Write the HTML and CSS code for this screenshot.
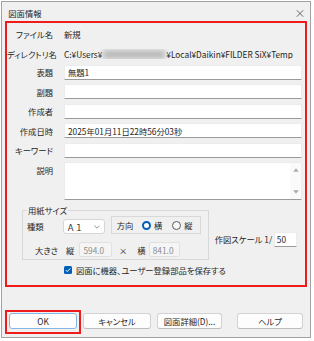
FILE: index.html
```html
<!DOCTYPE html>
<html lang="ja">
<head>
<meta charset="utf-8">
<title>図面情報</title>
<link rel="stylesheet" href="styles.css">
</head>
<body>
<div class="window">
  <div class="titlebar">
    <span class="title">図面情報</span>
    <svg class="close" width="8" height="7" viewBox="0 0 8 7"><path d="M0.8 0.3 L7.2 6.7 M7.2 0.3 L0.8 6.7" stroke="#5a5a5a" stroke-width="0.9" fill="none"/></svg>
  </div>
  <div class="form highlight">
    <div class="fields">
      <span class="label">ファイル名</span><span class="value">新規</span>
      <span class="label">ディレクトリ名</span><span class="value path">C:¥Users¥<span class="blur"></span>¥Local¥Daikin¥FILDER SiX¥Temp</span>
      <span class="label">表題</span><div class="input">無題1</div>
      <span class="label">副題</span><div class="input"></div>
      <span class="label">作成者</span><div class="input"></div>
      <span class="label">作成日時</span><div class="input">2025年01月11日22時56分03秒</div>
      <span class="label">キーワード</span><div class="input"></div>
      <span class="label label-top">説明</span>
      <div class="input textarea">
        <div class="scrollbar">
          <svg width="6" height="4" viewBox="0 0 6 4"><path d="M3 0.3 L5.7 3.7 L0.3 3.7 Z" fill="#a9a9a9"/></svg>
          <svg width="6" height="4" viewBox="0 0 6 4"><path d="M0.3 0.3 L5.7 0.3 L3 3.7 Z" fill="#a9a9a9"/></svg>
        </div>
      </div>
    </div>
    <div class="paper-row">
      <fieldset class="group">
        <legend>用紙サイズ</legend>
        <div class="group-row">
          <span class="kind-label">種類</span>
          <div class="combo"><span>Ａ１</span>
            <svg width="6" height="4" viewBox="0 0 6 4"><path d="M0.4 0.6 L3 3.2 L5.6 0.6" stroke="#777" stroke-width="0.8" fill="none"/></svg>
          </div>
          <div class="direction">
            <span>方向</span>
            <span class="radio checked"></span><span class="radio-text">横</span>
            <span class="radio radio-second"></span><span class="radio-text">縦</span>
          </div>
        </div>
        <div class="group-row size-row">
          <span class="size-label">大きさ</span>
          <span class="dim-label">縦</span>
          <div class="dim">594.0</div>
          <span class="times">×</span>
          <span class="dim-label dim-label-h">横</span>
          <div class="dim dim-narrow">841.0</div>
        </div>
      </fieldset>
      <div class="scale">
        <span>作図スケール 1/</span>
        <div class="input scale-input">50</div>
      </div>
    </div>
    <div class="check-row">
      <span class="checkbox"><svg width="8" height="8" viewBox="0 0 8 8"><path d="M1.8 4.1 L3.3 5.6 L6.3 2.4" stroke="#fff" stroke-width="1" fill="none"/></svg></span>
      <span class="check-text">図面に機器、ユーザー登録部品を保存する</span>
    </div>
  </div>
  <div class="buttons">
    <div class="default-wrap highlight"><button class="btn btn-default">OK</button></div>
    <button class="btn btn-cancel">キャンセル</button>
    <button class="btn btn-detail">図面詳細(D)...</button>
    <button class="btn btn-help">ヘルプ</button>
  </div>
</div>
</body>
</html>
```
FILE: styles.css
```css
* { box-sizing: border-box; }
html, body { margin: 0; padding: 0; background: #ffffff; }
body {
  padding: 1px;
  font-family: "Noto Sans CJK JP", "Noto Sans", sans-serif;
  font-size: 8.3px;
  line-height: 10px;
  color: #1e1e1e;
  font-feature-settings: "palt";
}
.window {
  width: 310px;
  height: 337px;
  border: 1px solid #a2a2a2;
  background: #f0f0f0;
  display: flex;
  flex-direction: column;
}
.titlebar {
  height: 19px;
  padding: 3px 6px 0 6.3px;
  display: flex;
  align-items: center;
  justify-content: space-between;
}
.title { color: #1e1e1e; }
.close { display: block; }

.highlight { border: 2px solid #ee1c1c; }
.form {
  margin: 0 3px;
  padding-bottom: 10px;
}
.fields {
  display: grid;
  grid-template-columns: 46px 238px;
  grid-template-rows: 20px 11.5px repeat(5, 15px) 38px;
  row-gap: 4.5px;
  column-gap: 11px;
  padding-top: 1px;
  align-items: center;
}
.label { text-align: right; color: #262626; white-space: nowrap; }
.label-top { align-self: start; padding-top: 2.5px; }
.value { white-space: nowrap; overflow: hidden; }
.path { display: flex; align-items: center; }
.blur {
  display: inline-block;
  width: 62px;
  height: 9px;
  margin: 0 1px;
  background: #bcbcbc;
  filter: blur(2.5px);
  flex: none;
}
.input {
  height: 15px;
  background: #ffffff;
  border: 1px solid #ececec;
  border-bottom-color: #9a9a9a;
  border-radius: 1px;
  padding: 0 3px;
  display: flex;
  align-items: center;
  white-space: nowrap;
}
.textarea {
  height: 38px;
  padding: 0;
  justify-content: flex-end;
  align-items: stretch;
}
.scrollbar {
  width: 11px;
  background: #fafafa;
  display: flex;
  flex-direction: column;
  align-items: center;
  justify-content: space-between;
  padding: 5px 0 5px;
}
.scrollbar svg { display: block; }

.paper-row {
  display: flex;
  align-items: flex-end;
  margin-top: 5px;
  padding-left: 14.5px;
}
.group {
  margin: 0;
  min-width: 0;
  width: 187.5px;
  padding: 1px 4.5px 2px 4.5px;
  border: 1px solid #d8d8d8;
}
.group legend {
  padding: 0 1px;
  margin-left: 0;
  line-height: 10px;
  height: 10px;
}
.group-row {
  display: flex;
  align-items: flex-end;
  height: 18px;
}
.kind-label { width: 36px; line-height: 15px; }
.combo {
  width: 42px;
  height: 15px;
  background: #ffffff;
  border: 1px solid #d5d5d5;
  border-radius: 3px;
  padding: 0 4px 0 2.5px;
  display: flex;
  align-items: center;
  justify-content: space-between;
  font-feature-settings: normal;
}
.combo svg { display: block; }
.direction {
  width: 90px;
  height: 18px;
  margin-left: 6px;
  border: 1px solid #d8d8d8;
  display: flex;
  align-items: center;
  padding-left: 4.7px;
}
.radio {
  width: 9px;
  height: 9px;
  border-radius: 50%;
  margin-left: 9px;
  border: 1px solid #5a5a5a;
  background: #f8f8f8;
  flex: none;
}
.radio.checked {
  border: 2.6px solid #005fb8;
  background: #ffffff;
}
.radio-second { margin-left: 10px; }
.radio-text { margin-left: 2.8px; }

.size-row {
  margin-top: 8px;
  height: 15px;
  align-items: center;
}
.size-label { margin-left: 8px; }
.dim-label { margin-left: 8px; }
.dim-label-h { margin-left: 10px; }
.dim {
  width: 33px;
  height: 15px;
  margin-left: 4.7px;
  background: #f5f5f5;
  border: 1px solid #e1e1e1;
  border-radius: 2px;
  color: #8c8c8c;
  padding-left: 3.5px;
  display: flex;
  align-items: center;
}
.dim-narrow { width: 31px; margin-left: 3.7px; padding-left: 2.5px; }
.times { margin-left: 7px; }

.scale {
  display: flex;
  align-items: center;
  margin-left: 5.7px;
  margin-bottom: 13.3px;
  white-space: nowrap;
}
.scale-input { width: 23.3px; margin-left: 1.7px; padding-left: 2px; }

.check-row {
  display: flex;
  align-items: center;
  margin-top: 5px;
  height: 10px;
  padding-left: 57.3px;
}
.checkbox {
  width: 8px;
  height: 8px;
  background: #005fb8;
  border-radius: 1.5px;
  flex: none;
}
.checkbox svg { display: block; }
.check-text { margin-left: 3.7px; }

.buttons {
  display: flex;
  align-items: flex-start;
  margin-top: 23px;
  padding-left: 3px;
}
.default-wrap { padding: 1px 2px 3px 2px; }
.btn {
  height: 16px;
  width: 68px;
  margin: 0;
  padding: 0;
  background: #fdfdfd;
  border: 1px solid #d2d2d2;
  border-bottom-color: #bdbdbd;
  border-radius: 3px;
  font-family: inherit;
  font-size: 8.3px;
  line-height: 10px;
  color: #1e1e1e;
  font-feature-settings: "palt";
  display: flex;
  align-items: center;
  justify-content: center;
}
.btn-default { border-color: #84b6e6; }
.btn-cancel { margin: 3px 0 0 2px; }
.btn-detail { margin: 3px 0 0 6px; width: 65px; }
.btn-help { margin: 3px 0 0 15px; width: 66px; }
```
